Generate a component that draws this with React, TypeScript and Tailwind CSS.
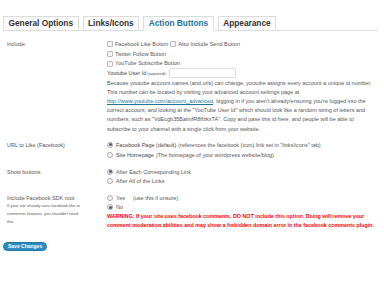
import type { ReactNode } from 'react';

const tabs = ['General Options', 'Links/Icons', 'Action Buttons', 'Appearance'];

function Checkbox() {
  return <span className="inline-block w-[6px] h-[6px] border border-[#bbb] bg-[#f4f4f4] rounded-[1px] mr-[2px] shrink-0" />;
}

function Radio({ checked = false }: { checked?: boolean }) {
  return (
    <span className="inline-flex items-center justify-center w-[6px] h-[6px] rounded-full border border-[#aaa] bg-[#f6f6f6] mr-[3px] shrink-0">
      {checked && <span className="block w-[3px] h-[3px] rounded-full bg-[#4a5c74]" />}
    </span>
  );
}

function Row({ label, children, labelExtra }: { label: string; children: ReactNode; labelExtra?: ReactNode }) {
  return (
    <div className="flex">
      <div className="w-[107px] shrink-0 pl-[7px]">
        <div className="h-[10px] flex items-center">{label}</div>
        {labelExtra}
      </div>
      <div className="flex-1">{children}</div>
    </div>
  );
}

export default function App() {
  return (
    <div className="w-[384px] h-[288px] bg-white overflow-hidden text-[5.5px] text-[#555] font-['Liberation_Sans',Arial,sans-serif]">
      <div className="pt-[16px] px-[3px]">
        <div className="flex gap-[4px] border-b border-[#dcdcdc] mr-[3px]">
          {tabs.map((t, i) => {
            const active = i === 2;
            return (
              <div
                key={t}
                className={`h-[15px] -mb-px px-[4.5px] flex items-center border border-[#dcdcdc] text-[8.3px] font-bold ${
                  active ? 'text-[#21759b] bg-white border-b-white' : 'text-[#333] bg-[#fcfcfc]'
                }`}
              >
                {t}
              </div>
            );
          })}
        </div>
      </div>

      <div className="mt-[8px]">
        <Row label="Include:">
          <div className="h-[10px] flex items-center">
            <Checkbox />
            <span>Facebook Like Button</span>
            <span className="ml-[2px]" />
            <Checkbox />
            <span>Also Include Send Button</span>
          </div>
          <div className="h-[10px] flex items-center">
            <Checkbox />
            <span>Twitter Follow Button</span>
          </div>
          <div className="h-[9px] flex items-center">
            <Checkbox />
            <span>YouTube Subscribe Button</span>
          </div>
          <div className="h-[10px] flex items-center">
            <span className="text-[#444]">Youtube User Id</span>
            <span className="text-[4.2px] ml-[1px] mt-[2px]">(required):</span>
            <span className="ml-[2px] w-[67px] h-[10px] border border-[#dcdcdc] rounded-[2px] bg-white" />
          </div>
          <p className="mt-[0.5px] leading-[9.2px] whitespace-nowrap">
            Because youtube account names (and urls) can change, youtube assigns every account a unique id number.
            <br />
            This number can be located by visiting your advanced account settings page at
            <br />
            <span className="text-[#21759b] underline">http://www.youtube.com/account_advanced</span>, logging in if you aren't already/ensuring you're logged into the
            <br />
            correct account, and looking at the "YouTube User Id" which should look like a random string of letters and
            <br />
            numbers, such as "VdEcgb35BalmfR8ffzkxTA". Copy and pase this id here, and people will be able to
            <br />
            subscribe to your channel with a single click from your website.
          </p>
        </Row>

        <div className="mt-[6px]">
          <Row label="URL to Like (Facebook)">
            <div className="h-[10px] flex items-center whitespace-nowrap">
              <Radio checked />
              <span className="text-[#444]">Facebook Page (default)</span>
              <span className="ml-[2px]">(references the facebook (icon) link set in "links/icons" tab)</span>
            </div>
            <div className="h-[10px] flex items-center whitespace-nowrap">
              <Radio />
              <span className="text-[#444]">Site Homepage</span>
              <span className="ml-[2px]">(The homepage of your wordpress website/blog)</span>
            </div>
          </Row>
        </div>

        <div className="mt-[7px]">
          <Row label="Show buttons:">
            <div className="h-[10px] flex items-center">
              <Radio checked />
              <span>After Each Corresponding Link</span>
            </div>
            <div className="h-[9px] flex items-center">
              <Radio />
              <span>After All of the Links</span>
            </div>
          </Row>
        </div>

        <div className="mt-[7px]">
          <Row
            label="Include Facebook SDK root"
            labelExtra={
              <p className="text-[4.1px] leading-[8px] -mt-[1px]">
                If your site already uses facebook like or
                <br />
                comments features, you shouldn't need
                <br />
                this.
              </p>
            }
          >
            <div className="h-[10px] flex items-center">
              <Radio />
              <span>Yes</span>
              <span className="ml-[8px]">(use this if unsure)</span>
            </div>
            <div className="h-[9px] flex items-center">
              <Radio checked />
              <span>No</span>
            </div>
            <p className="leading-[9px] text-[#ff0000] font-bold whitespace-nowrap text-[5.35px]">
              WARNING: If your site uses facebook comments, DO NOT include this option. Doing will remove your
              <br />
              comment moderation abilities and may show a forbidden domain error in the facebook comments plugin.
            </p>
          </Row>
        </div>

        <div className="mt-[12px] pl-[3px]">
          <button className="h-[9px] px-[4px] rounded-full bg-[#2e8cc4] border border-[#21759b] text-white font-bold text-[5px] leading-none">
            Save Changes
          </button>
        </div>
      </div>
    </div>
  );
}
